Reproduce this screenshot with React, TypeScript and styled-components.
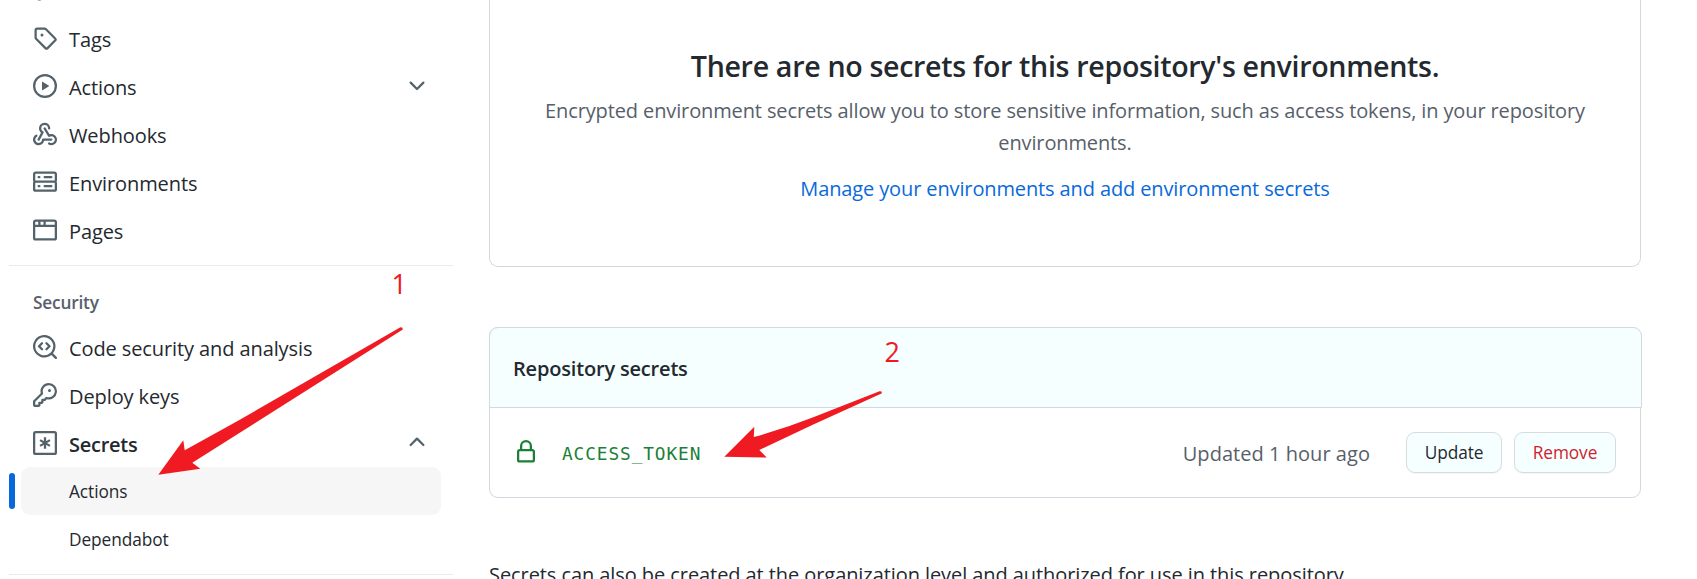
import React from "react";
import styled, { createGlobalStyle } from "styled-components";

const GlobalStyle = createGlobalStyle`
  *, *::before, *::after { box-sizing: border-box; }
  html, body, #root { height: 100%; }
  body {
    margin: 0;
    overflow: hidden;
    background: #ffffff;
    color: #24292f;
    font-family: "Open Sans", "Noto Sans", sans-serif;
    font-size: 20px;
    line-height: 32px;
  }
`;

const Page = styled.div`
  position: relative;
  display: flex;
  gap: 36px;
  height: 579px;
  padding-left: 9px;
  overflow: hidden;
`;

/* ---------- Sidebar ---------- */

const Sidebar = styled.nav`
  display: flex;
  flex-direction: column;
  flex: none;
  width: 444px;
  margin-top: -34px;
`;

const NavItem = styled.a<{ $bold?: boolean }>`
  display: flex;
  align-items: center;
  flex: none;
  gap: 12px;
  height: 48px;
  padding: 0 24px;
  font-weight: ${(p) => (p.$bold ? 600 : 400)};
  letter-spacing: ${(p) => (p.$bold ? "-0.25px" : "-0.1px")};
  white-space: nowrap;
`;

const NavLabel = styled.span`
  flex: 1;
  padding-top: 3px;
`;

const SubItem = styled.a<{ $current?: boolean }>`
  position: relative;
  display: flex;
  align-items: center;
  flex: none;
  height: 48px;
  margin: 0 12px;
  padding: 2px 0 0 48px;
  border-radius: 9px;
  background: ${(p) => (p.$current ? "#f6f6f6" : "transparent")};
  font-size: 17.3px;
  letter-spacing: -0.08px;
`;

const CurrentMark = styled.span`
  position: absolute;
  left: -12px;
  top: 6px;
  width: 6px;
  height: 36px;
  border-radius: 3px;
  background: #0969da;
`;

const Divider = styled.hr`
  flex: none;
  height: 1px;
  margin: 11px 0 0;
  border: 0;
  background: #e9ecee;
`;

const GroupTitle = styled.h3`
  display: flex;
  align-items: center;
  flex: none;
  height: 57px;
  margin: 0;
  padding: 16px 24px 0;
  color: #57606a;
  font-size: 17.3px;
  font-weight: 600;
  letter-spacing: -0.2px;
`;

/* ---------- Main column ---------- */

const Main = styled.main`
  display: flex;
  flex-direction: column;
  flex: none;
  width: 1152px;
`;

const EmptyPanel = styled.section`
  display: flex;
  flex-direction: column;
  align-items: center;
  flex: none;
  height: 267px;
  padding-top: 43px;
  border: 1px solid #d3d7df;
  border-top: 0;
  border-radius: 0 0 9px 9px;
  text-align: center;
  white-space: nowrap;
`;

const EmptyTitle = styled.h2`
  margin: 0 0 6px;
  font-size: 28.6px;
  font-weight: 600;
  line-height: 46px;
  letter-spacing: -0.33px;
`;

const EmptyText = styled.p`
  margin: 0 0 14px;
  color: #57606a;
  letter-spacing: -0.12px;
`;

const Link = styled.a`
  color: #0969da;
  letter-spacing: -0.12px;
`;

const SecretsPanel = styled.section`
  flex: none;
  height: 171px;
  margin: 60px 0;
  border: 1px solid #d3d7df;
  border-radius: 9px;
`;

const PanelHeader = styled.header`
  display: flex;
  align-items: center;
  height: 81px;
  margin: -1px -2px 0 -1px;
  padding: 3px 24px 0 23px;
  border: 1px solid #d3d7df;
  border-radius: 9px 9px 0 0;
  background: #f6ffff;
  font-weight: 600;
  letter-spacing: -0.18px;
`;

const SecretRow = styled.div`
  display: flex;
  align-items: center;
  height: 89px;
  padding: 0 24px;
`;

const SecretName = styled.code`
  flex: 1;
  padding: 3px 0 0 24px;
  color: #1a7f37;
  font-family: "DejaVu Sans Mono", "Liberation Mono", monospace;
  font-size: 17.8px;
  letter-spacing: 0.9px;
`;

const Updated = styled.span`
  margin-right: 36px;
  padding-top: 2px;
  color: #57606a;
  letter-spacing: 0.04px;
`;

const Button = styled.button<{ $width: number; $danger?: boolean }>`
  width: ${(p) => p.$width}px;
  height: 41px;
  padding: 0;
  border: 1px solid #d6dcde;
  border-radius: 9px;
  background: #f6ffff;
  box-shadow: 0 1px 0 rgba(27, 31, 36, 0.04);
  color: ${(p) => (p.$danger ? "#cf222e" : "#24292f")};
  font-family: inherit;
  font-size: 17.3px;
  line-height: 30px;
  letter-spacing: -0.1px;

  & + & { margin-left: 12px; }
`;

const FootNote = styled.p`
  margin: 0;
  padding-top: 1px;
  letter-spacing: -0.075px;
  white-space: nowrap;
`;

const Overlay = styled.svg`
  position: absolute;
  inset: 0;
  fill: #f01a22;
  font-family: "Open Sans", sans-serif;
  font-size: 27px;
`;

/* ---------- Icons ---------- */

const Glyph = styled.svg<{ $color?: string; $raised?: boolean }>`
  flex: none;
  width: 24px;
  height: 24px;
  margin-bottom: ${(p) => (p.$raised ? "2px" : "0")};
  fill: ${(p) => p.$color ?? "#53626b"};
`;

const icons = {
  branch: "M9.5 3.25a2.25 2.25 0 1 1 3 2.122V6A2.5 2.5 0 0 1 10 8.5H6a1 1 0 0 0-1 1v1.128a2.251 2.251 0 1 1-1.5 0V5.372a2.25 2.25 0 1 1 1.5 0v1.836A2.493 2.493 0 0 1 6 7h4a1 1 0 0 0 1-1v-.628A2.25 2.25 0 0 1 9.5 3.25Zm-6 0a.75.75 0 1 0 1.5 0 .75.75 0 0 0-1.5 0Zm8.25-.75a.75.75 0 1 0 0 1.5.75.75 0 0 0 0-1.5ZM4.25 12a.75.75 0 1 0 0 1.5.75.75 0 0 0 0-1.5Z",
  tag: "M1 7.775V2.75C1 1.784 1.784 1 2.75 1h5.025c.464 0 .91.184 1.238.513l6.25 6.25a1.75 1.75 0 0 1 0 2.474l-5.026 5.026a1.75 1.75 0 0 1-2.474 0l-6.25-6.25A1.752 1.752 0 0 1 1 7.775Zm1.5 0c0 .066.026.13.073.177l6.25 6.25a.25.25 0 0 0 .354 0l5.025-5.025a.25.25 0 0 0 0-.354l-6.25-6.25a.25.25 0 0 0-.177-.073H2.75a.25.25 0 0 0-.25.25ZM6 5a1 1 0 1 1 0 2 1 1 0 0 1 0-2Z",
  play: "M8 0a8 8 0 1 1 0 16A8 8 0 0 1 8 0ZM1.5 8a6.5 6.5 0 1 0 13 0 6.5 6.5 0 0 0-13 0Zm4.879-2.773 4.264 2.559a.25.25 0 0 1 0 .428l-4.264 2.559A.25.25 0 0 1 6 10.559V5.442a.25.25 0 0 1 .379-.215Z",
  webhook: "M5.5 4.25a2.25 2.25 0 0 1 4.5 0 .75.75 0 0 0 1.5 0 3.75 3.75 0 1 0-6.14 2.889l-2.272 4.258a.75.75 0 0 0 1.324.706L7 7.25a.75.75 0 0 0-.309-1.015A2.25 2.25 0 0 1 5.5 4.25Z M7.364 3.607a.75.75 0 0 1 1.03.257l2.608 4.349a3.75 3.75 0 1 1-.628 6.785.75.75 0 0 1 .752-1.299 2.25 2.25 0 1 0-.033-3.88.75.75 0 0 1-1.03-.256L7.107 4.636a.75.75 0 0 1 .257-1.03Z M2.9 8.776A.75.75 0 0 1 2.625 9.8 2.25 2.25 0 1 0 6 11.75a.75.75 0 0 1 .75-.751h5.5a.75.75 0 0 1 0 1.5H7.425a3.751 3.751 0 1 1-5.55-3.998.75.75 0 0 1 1.024.274Z",
  server: "M1.75 1h12.5c.966 0 1.75.784 1.75 1.75v4c0 .372-.116.717-.314 1 .198.283.314.628.314 1v4a1.75 1.75 0 0 1-1.75 1.75H1.75A1.75 1.75 0 0 1 0 12.75v-4c0-.358.109-.707.314-1a1.739 1.739 0 0 1-.314-1v-4C0 1.784.784 1 1.75 1ZM1.5 2.75v4c0 .138.112.25.25.25h12.5a.25.25 0 0 0 .25-.25v-4a.25.25 0 0 0-.25-.25H1.75a.25.25 0 0 0-.25.25Zm.25 5.75a.25.25 0 0 0-.25.25v4c0 .138.112.25.25.25h12.5a.25.25 0 0 0 .25-.25v-4a.25.25 0 0 0-.25-.25ZM7 4.75A.75.75 0 0 1 7.75 4h4.5a.75.75 0 0 1 0 1.5h-4.5A.75.75 0 0 1 7 4.75ZM7.75 10h4.5a.75.75 0 0 1 0 1.5h-4.5a.75.75 0 0 1 0-1.5ZM3 4.75A.75.75 0 0 1 3.75 4h.5a.75.75 0 0 1 0 1.5h-.5A.75.75 0 0 1 3 4.75ZM3.75 10h.5a.75.75 0 0 1 0 1.5h-.5a.75.75 0 0 1 0-1.5Z",
  browser: "M0 2.75C0 1.784.784 1 1.75 1h12.5c.966 0 1.75.784 1.75 1.75v10.5A1.75 1.75 0 0 1 14.25 15H1.75A1.75 1.75 0 0 1 0 13.25ZM14.5 6h-13v7.25c0 .138.112.25.25.25h12.5a.25.25 0 0 0 .25-.25Zm-6-3.5v2h6V2.75a.25.25 0 0 0-.25-.25ZM5 2.5v2h2v-2Zm-3.25 0a.25.25 0 0 0-.25.25V4.5h2v-2Z",
  codescan: "M8.47 4.97a.75.75 0 0 0 0 1.06L9.94 7.5 8.47 8.97a.75.75 0 1 0 1.06 1.06l2-2a.75.75 0 0 0 0-1.06l-2-2a.75.75 0 0 0-1.06 0ZM6.53 6.03a.75.75 0 0 0-1.06-1.06l-2 2a.75.75 0 0 0 0 1.06l2 2a.75.75 0 1 0 1.06-1.06L5.06 7.5l1.47-1.47Z M12.246 13.307a7.501 7.501 0 1 1 1.06-1.06l2.474 2.473a.749.749 0 0 1-.326 1.275.749.749 0 0 1-.734-.215ZM1.5 7.5a6.002 6.002 0 0 0 3.608 5.504 6.002 6.002 0 0 0 6.486-1.117.748.748 0 0 1 .292-.293A6 6 0 1 0 1.5 7.5Z",
  key: "M10.5 0a5.499 5.499 0 1 1-1.288 10.848l-.932.932a.749.749 0 0 1-.53.22H7v.75a.749.749 0 0 1-.22.53l-.5.5a.749.749 0 0 1-.53.22H5v.75a.749.749 0 0 1-.22.53l-.5.5a.749.749 0 0 1-.53.22h-2A1.75 1.75 0 0 1 0 14.25v-2c0-.199.079-.389.22-.53l4.932-4.932A5.5 5.5 0 0 1 10.5 0Zm-4 5.5c-.001.431.069.86.205 1.269a.75.75 0 0 1-.181.768L1.5 12.56v1.69c0 .138.112.25.25.25h1.69l.06-.06v-1.19a.75.75 0 0 1 .75-.75h1.19l.06-.06v-1.19a.75.75 0 0 1 .75-.75h1.19l1.023-1.025a.75.75 0 0 1 .768-.18A4 4 0 1 0 6.5 5.5ZM11 6a1 1 0 1 1 0-2 1 1 0 0 1 0 2Z",
  lock: "M4 4a4 4 0 0 1 8 0v2h.25c.966 0 1.75.784 1.75 1.75v5.5A1.75 1.75 0 0 1 12.25 15h-8.5A1.75 1.75 0 0 1 2 13.25v-5.5C2 6.784 2.784 6 3.75 6H4Zm8.25 3.5h-8.5a.25.25 0 0 0-.25.25v5.5c0 .138.112.25.25.25h8.5a.25.25 0 0 0 .25-.25v-5.5a.25.25 0 0 0-.25-.25ZM10.5 6V4a2.5 2.5 0 1 0-5 0v2Z",
  chevronDown: "M12.78 5.22a.749.749 0 0 1 0 1.06l-4.25 4.25a.749.749 0 0 1-1.06 0L3.22 6.28a.749.749 0 1 1 1.06-1.06L8 8.939l3.72-3.719a.749.749 0 0 1 1.06 0Z",
  chevronUp: "M3.22 10.53a.749.749 0 0 1 0-1.06l4.25-4.25a.749.749 0 0 1 1.06 0l4.25 4.25a.749.749 0 1 1-1.06 1.06L8 6.811 4.28 10.53a.749.749 0 0 1-1.06 0Z",
};

type IconName = keyof typeof icons;

const Icon = ({ name, color, raised }: { name: IconName; color?: string; raised?: boolean }) => (
  <Glyph viewBox="0 0 16 16" $color={color} $raised={raised} aria-hidden="true">
    <path d={icons[name]} />
  </Glyph>
);

const AsteriskIcon = () => (
  <Glyph viewBox="0 0 16 16" aria-hidden="true">
    <g fill="none" stroke="#53626b" strokeWidth="1.5">
      <rect x="0.75" y="0.75" width="14.5" height="14.5" rx="1" />
      <path d="M8 4.2v7.6M4.7 6.1l6.6 3.8M11.3 6.1l-6.6 3.8" />
    </g>
  </Glyph>
);

const codeItems: { icon: IconName; label: string; chevron?: boolean }[] = [
  { icon: "tag", label: "Tags" },
  { icon: "play", label: "Actions", chevron: true },
  { icon: "webhook", label: "Webhooks" },
  { icon: "server", label: "Environments" },
  { icon: "browser", label: "Pages" },
];

export default function App() {
  return (
    <>
      <GlobalStyle />
      <Page>
        <Sidebar>
          <NavItem>
            <Icon name="branch" />
          </NavItem>
          {codeItems.map((item) => (
            <NavItem key={item.label}>
              <Icon name={item.icon} />
              <NavLabel>{item.label}</NavLabel>
              {item.chevron && <Icon name="chevronDown" />}
            </NavItem>
          ))}
          <Divider />
          <GroupTitle>Security</GroupTitle>
          <NavItem>
            <Icon name="codescan" />
            <NavLabel>Code security and analysis</NavLabel>
          </NavItem>
          <NavItem>
            <Icon name="key" />
            <NavLabel>Deploy keys</NavLabel>
          </NavItem>
          <NavItem $bold>
            <AsteriskIcon />
            <NavLabel>Secrets</NavLabel>
            <Icon name="chevronUp" raised />
          </NavItem>
          <SubItem $current>
            <CurrentMark />
            Actions
          </SubItem>
          <SubItem>Dependabot</SubItem>
          <Divider />
        </Sidebar>

        <Main>
          <EmptyPanel>
            <EmptyTitle>There are no secrets for this repository's environments.</EmptyTitle>
            <EmptyText>
              Encrypted environment secrets allow you to store sensitive information, such as access tokens, in your repository
              <br />
              environments.
            </EmptyText>
            <Link>Manage your environments and add environment secrets</Link>
          </EmptyPanel>

          <SecretsPanel>
            <PanelHeader>Repository secrets</PanelHeader>
            <SecretRow>
              <Icon name="lock" color="#1a7f37" raised />
              <SecretName>ACCESS_TOKEN</SecretName>
              <Updated>Updated 1 hour ago</Updated>
              <Button $width={96}>Update</Button>
              <Button $width={102} $danger>Remove</Button>
            </SecretRow>
          </SecretsPanel>

          <FootNote>
            Secrets can also be created at the organization level and authorized for use in this repository.
          </FootNote>
        </Main>

        <Overlay width="1697" height="579" viewBox="0 0 1697 579">
          <text x="391.5" y="293.5">1</text>
          <path d="M158.3 474.7 183.3 440.2 184.7 450.3 236.7 421.5 400 327.4Q402.8 326.4 402.8 329.4L273.3 411.5 192.3 462.7 200.3 468.7Z" />
          <text x="884.5" y="361.5">2</text>
          <path d="M724.3 456.7 754.3 426.7 753.8 437 Q785 428.5 813.3 417.3L879.5 391.2Q882.8 391 881.5 393.6L813.3 424.5 759.3 450 766.7 457.5Z" />
        </Overlay>
      </Page>
    </>
  );
}
